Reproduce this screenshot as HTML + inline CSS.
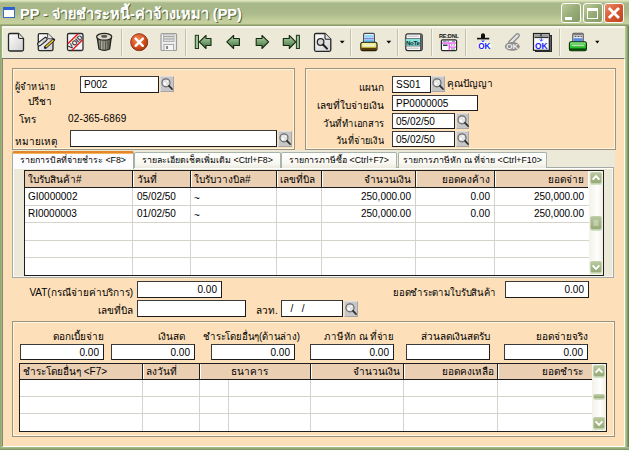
<!DOCTYPE html>
<html><head><meta charset="utf-8">
<style>
*{box-sizing:border-box;margin:0;padding:0}
html,body{width:629px;height:450px;overflow:hidden;background:#ECE9D8}
body{position:relative;font-family:"Liberation Sans",sans-serif;font-size:10px;color:#000}
.a{position:absolute}
svg{position:absolute;overflow:visible}
#title{left:0;top:0;width:629px;height:26px;background:linear-gradient(#DDE4BC 0px,#DDE4BC 1px,#BCC89C 2px,#AAB98A 3.5px,#A8B788 8px,#ADBC8D 14px,#BAC794 18px,#C5CF9D 21px,#C3CE9B 24px,#A4B17F 24.5px,#8E9C6A 25px,#8E9C6A 26px)}
#lb{left:0;top:26px;width:2px;height:424px;background:linear-gradient(90deg,#8EA66E,#A2BA82)}
#rb{left:625px;top:26px;width:4px;height:424px;background:linear-gradient(90deg,#C2D29C,#A0B67E 40%,#7E9660 70%,#5E7444)}
#bb{left:0;top:447px;width:629px;height:3px;background:linear-gradient(#ABC28A,#95AD74 50%,#7A9060)}
#tb{left:2px;top:26px;width:623px;height:32px;background:#ECE9D8;border-top:2px solid #F8F7EF;border-bottom:1px solid #EEEDE2;border-left:1px solid #F6F5EC}
#client{left:2px;top:58px;width:623px;height:389px;background:#FDDFB9;border-top:1px solid #6E6E62;border-left:1px solid #8A877A;border-right:1px solid #FFFFFF;border-bottom:1px solid #FFFFFF}
.gb{position:absolute;border:1px solid #9A9282;box-shadow:inset 0 0 0 1px #FFF6DA}
.lbl{position:absolute;white-space:nowrap;line-height:12px}
.inp{position:absolute;background:#FFF;border:1px solid #1C1C1C;border-top-color:#3A3A3A;border-left-color:#3A3A3A;white-space:nowrap;line-height:15px;padding-left:3px}
.inp.r{text-align:right;padding-right:4px}
.sep{position:absolute;top:29px;width:2px;height:27px;border-left:1px solid #C4C0AC;border-right:1px solid #F6F5EE}
.cap{position:absolute;top:3px;width:20px;height:20px;border:1px solid #FFF;border-radius:3px}
.sb{position:absolute;background:#C6C6C6;border-top:1px solid #DCDCDC;border-left:1px solid #DCDCDC;border-right:1px solid #A6A6A6;border-bottom:1px solid #A6A6A6}
.tab{position:absolute;top:152px;height:16px;background:linear-gradient(#FFFFFF,#F8F7F0 70%,#ECEAE0);border:1px solid #A9B4A9;border-bottom:none;border-radius:2px 2px 0 0;text-align:center;line-height:14px;white-space:nowrap;font-size:8.8px}
.sbtn{position:absolute;width:12px;height:12px;border-radius:2px;background:linear-gradient(#B8C89E,#A3B585 60%,#97AA7A);border:1px solid #C2D0AC;box-shadow:0 1px 0 #CFE3C2}

</style></head><body>
<div id="title" class="a"></div>
<div class="a" style="left:3px;top:7px;width:12px;height:11px;background:#FFF;border:1px solid #3A6BC8;border-top:3px solid #2B62D0"></div>
<div class="a" style="left:20px;top:5px;font-size:14.5px;font-weight:bold;color:#FFF;text-shadow:1px 1px 0 #5E6842;white-space:nowrap;line-height:18px">PP - จ่ายชำระหนี้-ค่าจ้างเหมา (PP)</div>
<div class="cap" style="left:561px;background:linear-gradient(135deg,#BCCB98,#98AC78 50%,#869A66)"></div>
<div class="a" style="left:565px;top:17px;width:7px;height:3px;background:#FFF"></div>
<div class="cap" style="left:583px;background:linear-gradient(135deg,#BCCB98,#98AC78 50%,#869A66)"></div>
<div class="a" style="left:587px;top:8px;width:11px;height:11px;border:1px solid #FFF;border-top:3px solid #FFF"></div>
<div class="cap" style="left:604px;background:linear-gradient(135deg,#EC9070,#D5582F 50%,#BE4520)"></div>
<svg style="left:604px;top:3px" width="20" height="20"><path d="M4.8 5L15 15M15 5L4.8 15" stroke="#FFF" stroke-width="2.8"/></svg>
<div id="lb" class="a"></div>
<div id="rb" class="a"></div>
<div id="bb" class="a"></div>
<div id="client" class="a"></div>
<div id="tb" class="a"></div>
<div class="sep" style="left:121px"></div>
<div class="sep" style="left:185px"></div>
<div class="sep" style="left:350px"></div>
<div class="sep" style="left:397px"></div>
<div class="sep" style="left:431px"></div>
<div class="sep" style="left:465px"></div>
<div class="sep" style="left:559px"></div>
<svg style="left:0;top:0" width="629" height="60" viewBox="0 0 629 60">
<defs>
<linearGradient id="gdoc" x1="0" y1="0" x2="1" y2="1"><stop offset="0" stop-color="#FFFFFF"/><stop offset="1" stop-color="#CFCFCF"/></linearGradient>
<linearGradient id="garr" x1="0" y1="0" x2="0" y2="1"><stop offset="0" stop-color="#B9D6B0"/><stop offset="0.45" stop-color="#7FA877"/><stop offset="1" stop-color="#3F6B3A"/></linearGradient>
<radialGradient id="gred" cx="0.4" cy="0.35" r="0.7"><stop offset="0" stop-color="#F78A55"/><stop offset="0.6" stop-color="#D4511D"/><stop offset="1" stop-color="#9E3410"/></radialGradient>
<linearGradient id="gtrash" x1="0" y1="0" x2="1" y2="0"><stop offset="0" stop-color="#5E5E52"/><stop offset="0.3" stop-color="#B4B4A6"/><stop offset="0.65" stop-color="#86867A"/><stop offset="1" stop-color="#4A4A40"/></linearGradient>
<linearGradient id="gyel" x1="0" y1="0" x2="0" y2="1"><stop offset="0" stop-color="#F6F4A8"/><stop offset="0.5" stop-color="#E2DC60"/><stop offset="1" stop-color="#B8A830"/></linearGradient>
<linearGradient id="ggrn" x1="0" y1="0" x2="0" y2="1"><stop offset="0" stop-color="#9CF89A"/><stop offset="0.45" stop-color="#2CD82C"/><stop offset="1" stop-color="#12A012"/></linearGradient>
</defs>
<!-- new doc -->
<path d="M8.5 35Q8.5 33.5 10 33.5H18.5L23.5 38.5V49.5Q23.5 51 22 51H10Q8.5 51 8.5 49.5Z" fill="url(#gdoc)" stroke="#262626" stroke-width="1.3"/>
<path d="M18.5 33.5V37Q18.5 38.5 20 38.5H23.5" fill="#E4E4E4" stroke="#262626" stroke-width="1.1"/>
<!-- edit doc -->
<path d="M38.3 35Q38.3 33.6 39.7 33.6H47.6L53 38.8V49.3Q53 50.6 51.7 50.6H39.7Q38.3 50.6 38.3 49.3Z" fill="url(#gdoc)" stroke="#2A2A2A" stroke-width="1.3"/>
<path d="M47.6 33.6V37.4Q47.6 38.8 49 38.8H53" fill="#EDEDED" stroke="#3A3A3A" stroke-width="0.9"/>
<path d="M39.4 44L45.4 39.2" stroke="#1E1E1E" stroke-width="4.6" stroke-linecap="round"/>
<path d="M39.4 44L45.4 39.2" stroke="#D6D6D6" stroke-width="2.4" stroke-linecap="round"/>
<path d="M39 44.6L42 42.2" stroke="#F8F8F8" stroke-width="1" stroke-linecap="round"/>
<path d="M43.5 42L46.5 39.8" stroke="#6A6A6A" stroke-width="1" stroke-dasharray="0.8 0.8"/>
<path d="M45.4 47.4L53.6 39.8" stroke="#20203A" stroke-width="3" stroke-linecap="round"/>
<path d="M45.8 47L53.3 40.1" stroke="#F2C41E" stroke-width="1.5"/>
<!-- void -->
<rect x="67.5" y="33.5" width="15.5" height="17" rx="1.5" fill="#F2F4F6" stroke="#2A2A2A" stroke-width="1.3"/>
<path d="M67.8 43.8L78.2 33.8M72 50.2L82.7 39.8" stroke="#F01010" stroke-width="1.3"/>
<text x="0" y="0" transform="translate(77 43.8) rotate(-44)" font-family="Liberation Sans" font-weight="bold" font-size="7" text-anchor="middle" fill="#2E2E2E">VOID</text>
<!-- trash -->
<path d="M97.3 38L99 49Q104.2 51.8 109.6 49L111.2 38Z" fill="url(#gtrash)" stroke="#24241C" stroke-width="1.3"/>
<path d="M100.6 40.5V48.8M103 41V49.8M105.5 41V49.8M108 40.5V48.8" stroke="#55554A" stroke-width="0.9"/>
<ellipse cx="104.2" cy="36.8" rx="7.6" ry="3.4" fill="#DADAD0" stroke="#24241C" stroke-width="1.2"/>
<ellipse cx="104.2" cy="36.2" rx="3" ry="1.5" fill="#5A5A4E"/>
<!-- cancel -->
<circle cx="139.2" cy="42.2" r="9.6" fill="#FFFFFF" opacity="0.7"/>
<circle cx="139.2" cy="42.2" r="8.6" fill="url(#gred)" stroke="#7A2A0E" stroke-width="0.8"/>
<path d="M135.6 38.6L142.8 45.8M142.8 38.6L135.6 45.8" stroke="#FFFFFF" stroke-width="2.4" stroke-linecap="round"/>
<!-- save disabled -->
<path d="M161 34.5Q161 33.5 162 33.5H175.5Q176.5 33.5 176.5 34.5V49.5Q176.5 50.5 175.5 50.5H162Q161 50.5 161 49.5Z" fill="#EDEDED" stroke="#9A9A9A" stroke-width="1.2"/>
<rect x="163.5" y="34" width="10.5" height="7.5" fill="#DADADA" stroke="#A8A8A8" stroke-width="0.8"/>
<path d="M164 36.5H173.5M164 39H173.5" stroke="#A0A0A0" stroke-width="0.9"/>
<rect x="164" y="44.5" width="9.5" height="6" fill="#F6F6F6" stroke="#A0A0A0" stroke-width="0.9"/>
<rect x="166" y="46" width="2" height="3" fill="#8A8A8A"/>
<!-- first -->
<rect x="195.3" y="35.3" width="3.2" height="13.2" fill="#9CC596" stroke="#1E3A1A" stroke-width="1"/>
<path d="M199.3 41.9L206 35.5V38.5H211V45.5H206V48.5Z" fill="url(#garr)" stroke="#142A12" stroke-width="1.1" stroke-linejoin="round"/>
<!-- prev -->
<path d="M226.8 41.9L233.6 35.5V38.5H239.4V45.5H233.6V48.5Z" fill="url(#garr)" stroke="#142A12" stroke-width="1.1" stroke-linejoin="round"/>
<!-- next -->
<path d="M268.6 41.9L262 35.5V38.5H256.2V45.5H262V48.5Z" fill="url(#garr)" stroke="#142A12" stroke-width="1.1" stroke-linejoin="round"/>
<!-- last -->
<path d="M295.8 41.9L289.3 35.5V38.5H283.3V45.5H289.3V48.5Z" fill="url(#garr)" stroke="#142A12" stroke-width="1.1" stroke-linejoin="round"/>
<rect x="296.4" y="35.3" width="3.0" height="13.2" fill="#9CC596" stroke="#1E3A1A" stroke-width="1"/>
<!-- find doc -->
<path d="M314.5 35Q314.5 33.5 316 33.5H325L330.8 39.3V49.8Q330.8 51.3 329.3 51.3H316Q314.5 51.3 314.5 49.8Z" fill="url(#gdoc)" stroke="#262626" stroke-width="1.3"/>
<path d="M325 33.5V38Q325 39.3 326.3 39.3H330.8" fill="#E4E4E4" stroke="#262626" stroke-width="1.1"/>
<circle cx="320.6" cy="42" r="3.3" fill="#D8D8D8" stroke="#2A2A2A" stroke-width="1.3"/>
<path d="M323 44.5L327 48.6" stroke="#1A1A1A" stroke-width="2" stroke-linecap="round"/>
<path d="M339.8 40.8H344.6L342.2 43.6Z" fill="#000"/>
<!-- printer yellow -->
<rect x="363.6" y="33.4" width="10.8" height="9.2" rx="1" fill="#D8F2FF" stroke="#4A4A4A" stroke-width="1.1"/>
<rect x="364.3" y="35.2" width="9.4" height="2.4" fill="#8ED2F6"/>
<rect x="364.3" y="38.2" width="9.4" height="0.9" fill="#8A5AD0"/>
<rect x="364.3" y="39.4" width="9.4" height="2.6" fill="#6EC0F2"/>
<path d="M360.8 44.2Q360.8 42.2 362.8 42.2H375Q377 42.2 377 44.2V49Q377 50.6 375.4 50.6H362.4Q360.8 50.6 360.8 49Z" fill="url(#gyel)" stroke="#1E1A08" stroke-width="1.1"/>
<rect x="362.5" y="44.4" width="12.8" height="2.2" rx="1" fill="#F2F2D8"/>
<rect x="361.4" y="47.8" width="15" height="2.4" fill="#5A3A08"/>
<path d="M386.4 40.8H391.2L388.8 43.6Z" fill="#000"/>
<!-- teal note -->
<rect x="405.8" y="33.8" width="16.4" height="16.8" rx="2" fill="#F6F6F6" stroke="#2E2E2E" stroke-width="1.2"/>
<rect x="420" y="34.4" width="1.8" height="15.6" fill="#5A5A5A"/>
<rect x="405.2" y="38.6" width="15.2" height="7.4" fill="#86E2DC" stroke="#3A3A3A" stroke-width="0.6"/>
<path d="M407.5 36.2H418.5M407.5 48.2H418.5" stroke="#C0C0C0" stroke-width="1"/>
<text x="412.8" y="44.8" font-family="Liberation Sans" font-weight="bold" font-size="6.2" text-anchor="middle" fill="#0E2A28" letter-spacing="-0.3">NoTe</text>
<!-- RE:DNL -->
<text x="448.8" y="38.4" font-family="Liberation Sans" font-weight="bold" font-size="5.6" text-anchor="middle" fill="#111" letter-spacing="-0.25">RE:DNL</text>
<rect x="441.4" y="39.8" width="15.2" height="10.9" rx="1.2" fill="#FFFFFF" stroke="#2A2A2A" stroke-width="1.2"/>
<path d="M443 41.2H446.5M447.5 41.2H449M452 41.2H455" stroke="#4A5A7A" stroke-width="0.9"/>
<rect x="442" y="42.4" width="14" height="1.3" fill="#E050F0"/>
<rect x="448.6" y="43.5" width="1.3" height="6.8" fill="#E050F0"/>
<rect x="449.5" y="46.6" width="6.5" height="1.1" fill="#E050F0"/>
<path d="M443 45.2H447.5" stroke="#1A1A2A" stroke-width="1.3"/>
<path d="M451 45H452.5M453.5 45H455M451 49H455" stroke="#555" stroke-width="0.8"/>
<!-- OK stamp -->
<path d="M481 38V34.8Q481 33.2 483 33.2Q485 33.2 485 34.8V38Z" fill="#111"/>
<rect x="477" y="37.8" width="12.2" height="1.6" fill="#111"/>
<path d="M483 39.5V41.5M481.8 40.6L483 42L484.2 40.6" stroke="#2A50FF" stroke-width="0.9" fill="none"/>
<ellipse cx="484.3" cy="45.7" rx="7.2" ry="3.8" fill="#FFFFFF"/>
<text x="484.3" y="48.5" font-family="Liberation Sans" font-weight="bold" font-size="8.2" text-anchor="middle" fill="#1420FF">OK</text>
<!-- grey OK -->
<path d="M510.5 42.5L517.5 35.5" stroke="#8A8A8A" stroke-width="4.6" stroke-linecap="round"/>
<path d="M510.5 42.5L517.5 35.5" stroke="#E4E4E4" stroke-width="2.4" stroke-linecap="round"/>
<ellipse cx="512.3" cy="46.4" rx="7.4" ry="4.3" fill="#8C8C8C"/>
<text x="512.3" y="49.4" font-family="Liberation Sans" font-weight="bold" font-size="8" text-anchor="middle" fill="#F2F2F2">OK</text>
<!-- doc OK -->
<rect x="535.5" y="35.5" width="16" height="16" fill="#5E5E5E" stroke="#2A2A2A" stroke-width="1"/>
<rect x="533.5" y="33.5" width="15.8" height="16.8" fill="#FAFAFA" stroke="#1E1E1E" stroke-width="1.2"/>
<rect x="534.2" y="34.2" width="14.4" height="3" fill="#9A9A9A"/>
<path d="M534.5 37.6H548.5" stroke="#222" stroke-width="1"/>
<path d="M541 34V36.5" stroke="#222" stroke-width="1.2"/>
<path d="M541.3 38V41M539.8 39.6L541.3 41.2L542.8 39.6" stroke="#2A50FF" stroke-width="1" fill="none"/>
<text x="541.3" y="48.6" font-family="Liberation Sans" font-weight="bold" font-size="8.4" text-anchor="middle" fill="#1420FF">OK</text>
<!-- green printer -->
<rect x="572.8" y="33.3" width="10.4" height="9" rx="1" fill="#F4F4F4" stroke="#4A4A4A" stroke-width="1.1"/>
<rect x="573.4" y="33.8" width="9.2" height="1.6" fill="#7A7A7A"/>
<path d="M574.5 36.6H576.5M577.5 36.6H579.5M580.5 36.6H582" stroke="#333" stroke-width="0.9"/>
<rect x="573.4" y="38.2" width="9.2" height="3.4" fill="#5A8AE0"/>
<path d="M569.4 43.6Q569.4 41.8 571.2 41.8H584.6Q586.4 41.8 586.4 43.6V49Q586.4 50.8 584.6 50.8H571.2Q569.4 50.8 569.4 49Z" fill="url(#ggrn)" stroke="#0A2A0A" stroke-width="1.1"/>
<rect x="571.3" y="44.2" width="13.2" height="2.4" rx="1" fill="#B0E8A8" stroke="#3A8A38" stroke-width="0.5"/>
<rect x="570" y="48.4" width="15.8" height="2" fill="#0A4A0A"/>
<path d="M595.2 40.8H599.4L597.3 43.6Z" fill="#000"/>
</svg>
<!-- group box 1 -->
<div class="gb" style="left:12px;top:68px;width:283px;height:82px"></div>
<div class="lbl" style="left:15px;top:81px;transform:scaleX(0.91);transform-origin:left">ผู้จำหน่าย</div>
<div class="inp" style="left:80px;top:76px;width:79px;height:17px">P002</div>
<div class="sb" style="left:160px;top:76px;width:14px;height:16px"></div>
<svg style="left:0;top:0" width="1" height="1"><circle cx="166" cy="82.8" r="4" fill="#E2E2E2" stroke="#6A6A6A" stroke-width="1.2"/><circle cx="164.8" cy="83.8" r="1.3" fill="#FFF"/><circle cx="167.4" cy="81.2" r="0.8" fill="#FFF"/><path d="M169 85.8L172 89.0" stroke="#2E2E2E" stroke-width="1.8" stroke-linecap="round"/></svg>
<div class="lbl" style="left:28px;top:96px">ปรีชา</div>
<div class="lbl" style="left:19px;top:114px">โทร</div>
<div class="lbl" style="left:68px;top:113px;letter-spacing:0.15px">02-365-6869</div>
<div class="lbl" style="left:15px;top:136px">หมายเหตุ</div>
<div class="inp" style="left:70px;top:130px;width:207px;height:17px"></div>
<div class="sb" style="left:278px;top:131px;width:14px;height:16px"></div>
<svg style="left:0;top:0" width="1" height="1"><circle cx="284" cy="137.8" r="4" fill="#E2E2E2" stroke="#6A6A6A" stroke-width="1.2"/><circle cx="282.8" cy="138.8" r="1.3" fill="#FFF"/><circle cx="285.4" cy="136.20000000000002" r="0.8" fill="#FFF"/><path d="M287 140.8L290 144.0" stroke="#2E2E2E" stroke-width="1.8" stroke-linecap="round"/></svg>
<!-- group box 2 -->
<div class="gb" style="left:305px;top:68px;width:311px;height:82px"></div>
<div class="lbl" style="left:300px;top:82px;width:84px;text-align:right">แผนก</div>
<div class="inp" style="left:392px;top:76px;width:39px;height:17px">SS01</div>
<div class="sb" style="left:431px;top:76px;width:14px;height:16px"></div>
<svg style="left:0;top:0" width="1" height="1"><circle cx="437" cy="82.8" r="4" fill="#E2E2E2" stroke="#6A6A6A" stroke-width="1.2"/><circle cx="435.8" cy="83.8" r="1.3" fill="#FFF"/><circle cx="438.4" cy="81.2" r="0.8" fill="#FFF"/><path d="M440 85.8L443 89.0" stroke="#2E2E2E" stroke-width="1.8" stroke-linecap="round"/></svg>
<div class="lbl" style="left:447px;top:78px">คุณปัญญา</div>
<div class="lbl" style="left:300px;top:100px;width:84px;text-align:right">เลขที่ใบจ่ายเงิน</div>
<div class="inp" style="left:392px;top:95px;width:86px;height:16px">PP0000005</div>
<div class="lbl" style="left:300px;top:118px;width:84px;text-align:right;transform:scaleX(0.94);transform-origin:right">วันที่ทำเอกสาร</div>
<div class="inp" style="left:392px;top:113px;width:63px;height:16px">05/02/50</div>
<div class="sb" style="left:456px;top:113px;width:13px;height:16px"></div>
<svg style="left:0;top:0" width="1" height="1"><circle cx="462" cy="119.8" r="4" fill="#E2E2E2" stroke="#6A6A6A" stroke-width="1.2"/><circle cx="460.8" cy="120.8" r="1.3" fill="#FFF"/><circle cx="463.4" cy="118.2" r="0.8" fill="#FFF"/><path d="M465 122.8L468 126.0" stroke="#2E2E2E" stroke-width="1.8" stroke-linecap="round"/></svg>
<div class="lbl" style="left:300px;top:135px;width:84px;text-align:right;transform:scaleX(0.906);transform-origin:right">วันที่จ่ายเงิน</div>
<div class="inp" style="left:392px;top:131px;width:63px;height:16px">05/02/50</div>
<div class="sb" style="left:456px;top:131px;width:13px;height:16px"></div>
<svg style="left:0;top:0" width="1" height="1"><circle cx="462" cy="137.8" r="4" fill="#E2E2E2" stroke="#6A6A6A" stroke-width="1.2"/><circle cx="460.8" cy="138.8" r="1.3" fill="#FFF"/><circle cx="463.4" cy="136.20000000000002" r="0.8" fill="#FFF"/><path d="M465 140.8L468 144.0" stroke="#2E2E2E" stroke-width="1.8" stroke-linecap="round"/></svg>
<div class="a" style="left:12px;top:150px;width:603px;height:18px;background:#ECE9D8"></div>
<div class="a" style="left:12px;top:167px;width:602px;height:111px;background:#ECE9D8;border:1px solid #A3ABA8;box-shadow:inset 1px 1px 0 #FFF,inset -1px -1px 0 #F6F5EE"></div>
<div class="tab" style="left:134px;width:147px">รายละเอียดเช็คเพิ่มเติม  &lt;Ctrl+F8&gt;</div>
<div class="tab" style="left:281px;width:116px">รายการภาษีซื้อ &lt;Ctrl+F7&gt;</div>
<div class="tab" style="left:398px;width:149px">รายการภาษีหัก ณ ที่จ่าย &lt;Ctrl+F10&gt;</div>
<div class="a" style="left:12px;top:151px;width:122px;height:18px;background:#FCFCFE;border-left:1px solid #A3ABA8;border-right:1px solid #A3ABA8;border-top:2px solid #E3862B;box-shadow:inset 0 1px 0 #F9B45E;border-radius:2px 2px 0 0"></div>
<div class="lbl" style="left:12px;top:154px;width:122px;text-align:center;font-size:8.8px">รายการบิลที่จ่ายชำระ &lt;F8&gt;</div>
<div class="a" style="left:24px;top:170px;width:580px;height:106px;background:#FFF;border:1px solid #1E1E1E"></div>
<div class="a" style="left:25px;top:171px;width:563px;height:17px;background:#EBCFB3;border-bottom:1px solid #1E1E1E"></div>
<div class="a" style="left:25px;top:205px;width:564px;height:1px;background:#D6D3CA"></div>
<div class="a" style="left:25px;top:222px;width:564px;height:1px;background:#D6D3CA"></div>
<div class="a" style="left:25px;top:240px;width:564px;height:1px;background:#D6D3CA"></div>
<div class="a" style="left:25px;top:257px;width:564px;height:1px;background:#D6D3CA"></div>
<div class="a" style="left:132px;top:171px;width:1px;height:17px;background:#1E1E1E"></div>
<div class="a" style="left:133px;top:171px;width:1px;height:16px;background:#FFF"></div>
<div class="a" style="left:132px;top:188px;width:1px;height:87px;background:#D6D3CA"></div>
<div class="a" style="left:190px;top:171px;width:1px;height:17px;background:#1E1E1E"></div>
<div class="a" style="left:191px;top:171px;width:1px;height:16px;background:#FFF"></div>
<div class="a" style="left:190px;top:188px;width:1px;height:87px;background:#D6D3CA"></div>
<div class="a" style="left:276px;top:171px;width:1px;height:17px;background:#1E1E1E"></div>
<div class="a" style="left:277px;top:171px;width:1px;height:16px;background:#FFF"></div>
<div class="a" style="left:276px;top:188px;width:1px;height:87px;background:#D6D3CA"></div>
<div class="a" style="left:321px;top:171px;width:1px;height:17px;background:#1E1E1E"></div>
<div class="a" style="left:322px;top:171px;width:1px;height:16px;background:#FFF"></div>
<div class="a" style="left:321px;top:188px;width:1px;height:87px;background:#D6D3CA"></div>
<div class="a" style="left:415px;top:171px;width:1px;height:17px;background:#1E1E1E"></div>
<div class="a" style="left:416px;top:171px;width:1px;height:16px;background:#FFF"></div>
<div class="a" style="left:415px;top:188px;width:1px;height:87px;background:#D6D3CA"></div>
<div class="a" style="left:494px;top:171px;width:1px;height:17px;background:#1E1E1E"></div>
<div class="a" style="left:495px;top:171px;width:1px;height:16px;background:#FFF"></div>
<div class="a" style="left:494px;top:188px;width:1px;height:87px;background:#D6D3CA"></div>
<div class="lbl" style="left:28px;top:174px">ใบรับสินค้า#</div>
<div class="lbl" style="left:137px;top:174px">วันที่</div>
<div class="lbl" style="left:194px;top:174px">ใบรับวางบิล#</div>
<div class="lbl" style="left:280px;top:174px">เลขที่บิล</div>
<div class="lbl" style="left:261px;top:174px;width:150px;text-align:right">จำนวนเงิน</div>
<div class="lbl" style="left:340px;top:174px;width:150px;text-align:right">ยอดคงค้าง</div>
<div class="lbl" style="left:434px;top:174px;width:150px;text-align:right">ยอดจ่าย</div>
<div class="lbl" style="left:28px;top:191px">GI0000002</div>
<div class="lbl" style="left:137px;top:191px">05/02/50</div>
<div class="lbl" style="left:194px;top:193px">~</div>
<div class="lbl" style="left:261px;top:191px;width:150px;text-align:right">250,000.00</div>
<div class="lbl" style="left:340px;top:191px;width:150px;text-align:right">0.00</div>
<div class="lbl" style="left:434px;top:191px;width:150px;text-align:right">250,000.00</div>
<div class="lbl" style="left:28px;top:208px">RI0000003</div>
<div class="lbl" style="left:137px;top:208px">01/02/50</div>
<div class="lbl" style="left:194px;top:210px">~</div>
<div class="lbl" style="left:261px;top:208px;width:150px;text-align:right">250,000.00</div>
<div class="lbl" style="left:340px;top:208px;width:150px;text-align:right">0.00</div>
<div class="lbl" style="left:434px;top:208px;width:150px;text-align:right">250,000.00</div>
<div class="a" style="left:589px;top:171px;width:14px;height:104px;background:linear-gradient(90deg,#F3F1EA,#FEFEFB 60%,#F0EEE5)"></div>
<div class="sbtn" style="left:590px;top:172px"></div><svg style="left:590px;top:172px" width="12" height="12"><path d="M2.6 7.6L6 4.2L9.4 7.6" stroke="#FFF" stroke-width="1.9" fill="none"/></svg>
<div class="sbtn" style="left:590px;top:261px"></div><svg style="left:590px;top:261px" width="12" height="12"><path d="M2.6 4.4L6 7.8L9.4 4.4" stroke="#FFF" stroke-width="1.9" fill="none"/></svg>
<div class="sbtn" style="left:590px;top:216px;height:14px"></div>
<svg style="left:590px;top:216px" width="12" height="14"><path d="M3.5 5H8.5M3.5 7H8.5M3.5 9H8.5" stroke="#DDE6CC" stroke-width="1"/></svg>
<div class="lbl" style="left:0px;top:287px;width:133px;text-align:right">VAT(กรณีจ่ายค่าบริการ)</div>
<div class="inp r" style="left:137px;top:281px;width:85px;height:17px">0.00</div>
<div class="lbl" style="left:0px;top:305px;width:133px;text-align:right">เลขที่บิล</div>
<div class="inp" style="left:137px;top:300px;width:109px;height:17px"></div>
<div class="lbl" style="left:256px;top:305px">ลวท.</div>
<div class="inp" style="left:281px;top:300px;width:62px;height:17px">&nbsp;&nbsp;/&nbsp;&nbsp;&nbsp;/</div>
<div class="sb" style="left:344px;top:301px;width:14px;height:16px"></div>
<svg style="left:0;top:0" width="1" height="1"><circle cx="350" cy="307.8" r="4" fill="#E2E2E2" stroke="#6A6A6A" stroke-width="1.2"/><circle cx="348.8" cy="308.8" r="1.3" fill="#FFF"/><circle cx="351.4" cy="306.2" r="0.8" fill="#FFF"/><path d="M353 310.8L356 314.0" stroke="#2E2E2E" stroke-width="1.8" stroke-linecap="round"/></svg>

<div class="lbl" style="left:346px;top:287px;width:150px;text-align:right;transform:scaleX(0.95);transform-origin:right">ยอดชำระตามใบรับสินค้า</div>
<div class="inp r" style="left:505px;top:281px;width:84px;height:17px">0.00</div>
<div class="gb" style="left:12px;top:321px;width:603px;height:116px"></div>
<div class="lbl" style="left:-46px;top:331px;width:150px;text-align:right">ดอกเบี้ยจ่าย</div>
<div class="lbl" style="left:35px;top:331px;width:150px;text-align:right">เงินสด</div>
<div class="lbl" style="left:150px;top:331px;width:150px;text-align:right;transform:scaleX(0.96);transform-origin:right">ชำระโดยอื่นๆ(ด้านล่าง)</div>
<div class="lbl" style="left:244px;top:331px;width:150px;text-align:right;transform:scaleX(0.96);transform-origin:right">ภาษีหัก ณ ที่จ่าย</div>
<div class="lbl" style="left:340px;top:331px;width:150px;text-align:right">ส่วนลดเงินสดรับ</div>
<div class="lbl" style="left:438px;top:331px;width:150px;text-align:right">ยอดจ่ายจริง</div>
<div class="inp r" style="left:20px;top:344px;width:84px;height:16px">0.00</div>
<div class="inp r" style="left:111px;top:344px;width:84px;height:16px">0.00</div>
<div class="inp r" style="left:211px;top:344px;width:84px;height:16px">0.00</div>
<div class="inp r" style="left:310px;top:344px;width:84px;height:16px">0.00</div>
<div class="inp r" style="left:406px;top:344px;width:84px;height:16px"></div>
<div class="inp r" style="left:504px;top:344px;width:84px;height:16px">0.00</div>
<div class="a" style="left:19px;top:363px;width:588px;height:69px;background:#FFF;border:1px solid #1E1E1E"></div>
<div class="a" style="left:20px;top:364px;width:572px;height:16px;background:#EBCFB3;border-bottom:1px solid #1E1E1E"></div>
<div class="a" style="left:20px;top:396px;width:572px;height:1px;background:#D6D3CA"></div>
<div class="a" style="left:20px;top:413px;width:572px;height:1px;background:#D6D3CA"></div>
<div class="a" style="left:142px;top:364px;width:1px;height:16px;background:#1E1E1E"></div>
<div class="a" style="left:143px;top:364px;width:1px;height:15px;background:#FFF"></div>
<div class="a" style="left:142px;top:380px;width:1px;height:51px;background:#D6D3CA"></div>
<div class="a" style="left:199px;top:364px;width:1px;height:16px;background:#1E1E1E"></div>
<div class="a" style="left:200px;top:364px;width:1px;height:15px;background:#FFF"></div>
<div class="a" style="left:199px;top:380px;width:1px;height:51px;background:#D6D3CA"></div>
<div class="a" style="left:310px;top:364px;width:1px;height:16px;background:#1E1E1E"></div>
<div class="a" style="left:311px;top:364px;width:1px;height:15px;background:#FFF"></div>
<div class="a" style="left:310px;top:380px;width:1px;height:51px;background:#D6D3CA"></div>
<div class="a" style="left:403px;top:364px;width:1px;height:16px;background:#1E1E1E"></div>
<div class="a" style="left:404px;top:364px;width:1px;height:15px;background:#FFF"></div>
<div class="a" style="left:403px;top:380px;width:1px;height:51px;background:#D6D3CA"></div>
<div class="a" style="left:497px;top:364px;width:1px;height:16px;background:#1E1E1E"></div>
<div class="a" style="left:498px;top:364px;width:1px;height:15px;background:#FFF"></div>
<div class="a" style="left:497px;top:380px;width:1px;height:51px;background:#D6D3CA"></div>
<div class="a" style="left:228px;top:380px;width:1px;height:51px;background:#D6D3CA"></div>
<div class="lbl" style="left:23px;top:366px">ชำระโดยอื่นๆ &lt;F7&gt;</div>
<div class="lbl" style="left:146px;top:366px">ลงวันที่</div>
<div class="lbl" style="left:194px;top:366px;width:110px;text-align:center">ธนาคาร</div>
<div class="lbl" style="left:250px;top:366px;width:150px;text-align:right">จำนวนเงิน</div>
<div class="lbl" style="left:344px;top:366px;width:150px;text-align:right">ยอดคงเหลือ</div>
<div class="lbl" style="left:433px;top:366px;width:150px;text-align:right">ยอดชำระ</div>
<div class="a" style="left:592px;top:364px;width:14px;height:67px;background:linear-gradient(90deg,#F3F1EA,#FEFEFB 60%,#F0EEE5)"></div>
<div class="sbtn" style="left:593px;top:365px"></div><svg style="left:593px;top:365px" width="12" height="12"><path d="M2.6 7.6L6 4.2L9.4 7.6" stroke="#FFF" stroke-width="1.9" fill="none"/></svg>
<div class="sbtn" style="left:593px;top:417px"></div><svg style="left:593px;top:417px" width="12" height="12"><path d="M2.6 4.4L6 7.8L9.4 4.4" stroke="#FFF" stroke-width="1.9" fill="none"/></svg>
<div class="sbtn" style="left:593px;top:394px;height:5px"></div>

</body></html>
